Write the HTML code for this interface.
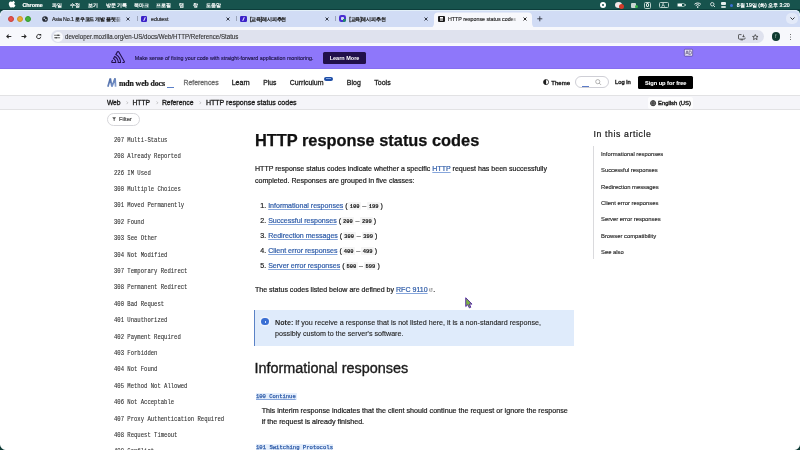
<!DOCTYPE html>
<html><head><meta charset="utf-8">
<style>
*{margin:0;padding:0;box-sizing:border-box}
html,body{width:800px;height:450px;overflow:hidden;background:#fff}
body{will-change:transform;-webkit-text-stroke:0.2px currentColor;font-family:"Liberation Sans",sans-serif;color:#1b1b1b;position:relative}
.a{position:absolute;white-space:nowrap}
svg.a{overflow:visible}
.mt{color:#fff;font-size:5.6px;line-height:10px;top:-0.5px;-webkit-text-stroke:0.2px #fff}
.tl{position:absolute;width:6.4px;height:6.4px;border-radius:50%;top:15.6px}
.tt{font-size:5.3px;line-height:8px;top:14.5px;color:#1f1f1f;-webkit-text-stroke:0.15px currentColor}
.tx{font-size:6px;line-height:8px;top:14px;color:#333}
.sep{position:absolute;top:16px;width:0.7px;height:5px;background:#9aa3b8}
.nav{font-size:6.9px;line-height:10px;top:77.6px;color:#1b1b1b;-webkit-text-stroke:0.28px currentColor}
.cr{font-size:6.8px;line-height:10px;top:97.8px;color:#1b1b1b;-webkit-text-stroke:0.3px currentColor}
.chev{position:absolute;top:101px;width:2.4px;height:2.4px;border-right:0.6px solid #888;border-top:0.6px solid #888;transform:rotate(45deg)}
.side{font-family:"Liberation Mono",monospace;font-size:5.57px;color:#2e2e2e;line-height:8px;left:114px;-webkit-text-stroke:0.08px currentColor;transform:scaleY(1.15);transform-origin:0 5.5px}
.toc{font-size:5.83px;color:#2a2a2a;line-height:8px;left:601px;-webkit-text-stroke:0.15px currentColor}
.p{font-size:7.05px;line-height:10px;color:#1b1b1b}
.lk{color:#2f5ca8;text-decoration:underline;text-decoration-color:#86a6dc;text-decoration-thickness:0.7px;text-underline-offset:0.6px;text-decoration-skip-ink:none}
.code{font-family:"Liberation Mono",monospace;font-weight:bold;font-size:5.5px;background:#f5f5f5;padding:0.5px 1.6px;margin:0 0.4px;border-radius:1px;color:#1b1b1b;-webkit-text-stroke:0.1px currentColor}
.cl{font-family:"Liberation Mono",monospace;font-weight:normal;font-size:5.52px;line-height:8px;color:#2f5ca8;text-decoration:underline;text-decoration-color:#86a6dc;text-underline-offset:0.5px;text-decoration-skip-ink:none;-webkit-text-stroke:0.25px currentColor}
</style></head><body>
<!-- ===== macOS menubar ===== -->
<div class="a" style="left:0;top:0;width:800px;height:16px;background:#17534d"></div>
<div class="a" style="left:0;top:9px;width:800px;height:1.5px;background:#0d3d3b"></div>
<svg class="a" style="left:8.6px;top:1.4px" width="6" height="7" viewBox="0 0 12 14"><path fill="#fff" d="M8.3 0c.1 1-.3 2-.9 2.7-.6.7-1.5 1.2-2.4 1.1-.1-1 .4-2 .9-2.6C6.5.5 7.5 0 8.3 0zM11.4 10.2c-.4.9-.6 1.3-1.1 2.1-.7 1.1-1.8 2.4-3 2.4-1.1 0-1.4-.7-2.9-.7s-1.8.7-2.9.7C.3 14.7-.7 13.5-1.4 12.4c-2-3-2.2-6.6-1-8.5.9-1.3 2.2-2.1 3.5-2.1 1.3 0 2.1.7 3.2.7 1 0 1.7-.7 3.2-.7 1.1 0 2.3.6 3.1 1.7-2.8 1.5-2.3 5.5.8 6.7z" transform="translate(2.5 -0.6) scale(0.92)"/></svg>
<div class="a mt" style="left:22.4px;font-weight:bold;font-size:5.4px">Chrome</div>
<div class="a mt" style="left:52px;font-size:5.2px">파일</div>
<div class="a mt" style="left:69.5px;font-size:5.2px">수정</div>
<div class="a mt" style="left:87.5px;font-size:5.2px">보기</div>
<div class="a mt" style="left:106px;font-size:5.2px">방문 기록</div>
<div class="a mt" style="left:134px;font-size:5.2px">북마크</div>
<div class="a mt" style="left:156px;font-size:5.2px">프로필</div>
<div class="a mt" style="left:179px;font-size:5.2px">탭</div>
<div class="a mt" style="left:193px;font-size:5.2px">창</div>
<div class="a mt" style="left:205.6px;font-size:5.2px">도움말</div>
<!-- status icons -->
<div class="a" style="left:599.6px;top:2px;width:6px;height:6px;border-radius:50%;background:#fff"></div>
<div class="a" style="left:601.6px;top:4px;width:2px;height:2px;border-radius:50%;background:#17534d"></div>
<div class="a" style="left:614.7px;top:1.8px;width:7px;height:6px;border-radius:50%;background:#f4e9e9"></div>
<div class="a" style="left:618.5px;top:4px;width:5px;height:5px;border-radius:50%;background:#d23a2a"></div>
<div class="a" style="left:630.5px;top:2.5px;width:5px;height:5px;border-radius:1px;background:#c9d6d3"></div>
<div class="a" style="left:634.5px;top:5.2px;width:3px;height:3px;border-radius:50%;background:#35b34a"></div>
<div class="a" style="left:644px;top:1.5px;width:7.3px;height:7px;border-radius:1.5px;border:0.8px solid #b9cfca"></div>
<div class="a" style="left:646.3px;top:3.3px;width:2.8px;height:3.4px;border:0.7px solid #dfe9e6;border-radius:1px"></div>
<div class="a" style="left:658.6px;top:1.7px;width:10px;height:6.8px;border-radius:1.5px;border:0.8px solid #b9cfca"></div>
<div class="a" style="left:661.6px;top:1px;font-size:5px;line-height:8px;color:#e6eeec;-webkit-text-stroke:0">A</div>
<div class="a" style="left:676.5px;top:3px;width:8.5px;height:4.3px;border-radius:1.2px;border:0.7px solid #8fb0aa;background:linear-gradient(90deg,#fff 70%,transparent 70%)"></div>
<div class="a" style="left:685.4px;top:4.4px;width:0.9px;height:1.6px;background:#8fb0aa"></div>
<svg class="a" style="left:694.4px;top:1.6px" width="7.4" height="6" viewBox="0 0 16 13"><g fill="none" stroke="#fff" stroke-width="2"><path d="M1 5a10 10 0 0 1 14 0"/><path d="M3.7 7.7a6.3 6.3 0 0 1 8.6 0"/></g><circle cx="8" cy="11" r="1.8" fill="#fff"/></svg>
<svg class="a" style="left:709.8px;top:2.2px" width="5.4" height="5.4" viewBox="0 0 10 10"><circle cx="4.2" cy="4.2" r="3.2" fill="none" stroke="#fff" stroke-width="1.4"/><path d="M6.6 6.6 9.3 9.3" stroke="#fff" stroke-width="1.5"/></svg>
<div class="a" style="left:721.2px;top:2px;width:4.8px;height:3px;border-radius:1px;background:#e8efee"></div>
<div class="a" style="left:721.2px;top:5.6px;width:4.8px;height:2.6px;border-radius:1px;background:#c6d6d3"></div>
<div class="a" style="left:729.5px;top:3.8px;width:3px;height:3px;border-radius:50%;background:#3d6fd6"></div>
<div class="a mt" style="left:736.7px;font-size:5.2px">8월 19일 (화) 오후 3:20</div>

<!-- ===== tab strip ===== -->
<div class="a" style="left:0;top:10px;width:800px;height:17px;background:#d1dcf5;border-radius:5px 5px 0 0"></div>
<div class="a" style="left:0;top:10px;width:800px;height:6px;border-top:1px solid #e2eff8;border-left:0.6px solid #e2eff8;border-right:0.6px solid #e2eff8;border-radius:5px 5px 0 0"></div>
<div class="tl" style="left:8.1px;background:#e5534d;border:0.4px solid #c9413b"></div>
<div class="tl" style="left:16.6px;background:#e9ab33;border:0.4px solid #cf9528"></div>
<div class="tl" style="left:25px;background:#45b13d;border:0.4px solid #35992f"></div>
<!-- tab1 -->
<svg class="a" style="left:41.9px;top:15.9px" width="6" height="6" viewBox="0 0 12 12"><circle cx="6" cy="6" r="5.7" fill="#262a33"/><ellipse cx="4.6" cy="4.4" rx="1.9" ry="1.6" fill="#c9d2e6"/><ellipse cx="7.6" cy="7.4" rx="1.8" ry="1.4" fill="#c9d2e6"/></svg>
<div class="a tt" style="left:51.9px;width:70px;overflow:hidden;letter-spacing:-0.12px;-webkit-mask-image:linear-gradient(90deg,#000 88%,transparent)">Asia No.1 <span style="-webkit-text-stroke:0.3px currentColor;letter-spacing:-0.25px">로우코드 개발 플랫폼</span> : 알</div>
<svg class="a" style="left:126.4px;top:16.5px" width="4" height="4" viewBox="0 0 8 8"><path d="M1 1 7 7M7 1 1 7" stroke="#2d3240" stroke-width="1.9"/></svg>
<div class="sep" style="left:136.5px"></div>
<!-- tab2 -->
<div class="a" style="left:140.8px;top:15.5px;width:6.6px;height:6.3px;border-radius:1.2px;background:#3b22c8"></div>
<div class="a" style="left:143.9px;top:16.6px;width:0.9px;height:4.1px;background:#e6e0ff;transform:rotate(25deg)"></div>
<div class="a tt" style="left:151px">edutest</div>
<svg class="a" style="left:225.5px;top:16.5px" width="4" height="4" viewBox="0 0 8 8"><path d="M1 1 7 7M7 1 1 7" stroke="#2d3240" stroke-width="1.9"/></svg>
<div class="sep" style="left:235.7px"></div>
<!-- tab3 -->
<div class="a" style="left:240px;top:15.5px;width:6.6px;height:6.3px;border-radius:1.2px;background:#3b22c8"></div>
<div class="a" style="left:243.1px;top:16.6px;width:0.9px;height:4.1px;background:#e6e0ff;transform:rotate(25deg)"></div>
<div class="a tt" style="left:250px;letter-spacing:-0.2px;-webkit-text-stroke:0.3px currentColor">[교육]레시피추천</div>
<svg class="a" style="left:324.5px;top:16.5px" width="4" height="4" viewBox="0 0 8 8"><path d="M1 1 7 7M7 1 1 7" stroke="#2d3240" stroke-width="1.9"/></svg>
<div class="sep" style="left:334.5px"></div>
<!-- tab4 -->
<div class="a" style="left:338.8px;top:15.4px;width:6.8px;height:6.6px;border-radius:2.2px;background:#4a2fd2"></div>
<div class="a" style="left:340.8px;top:17.4px;width:2.8px;height:2.6px;border-radius:0.8px;background:#d1dcf5"></div>
<div class="a" style="left:342.6px;top:19.2px;width:3px;height:2.8px;border-radius:0 0 2px 0;background:#1e8a6a"></div>
<div class="a tt" style="left:349.3px;letter-spacing:-0.2px;-webkit-text-stroke:0.3px currentColor">[교육]레시피추천</div>
<svg class="a" style="left:423.75px;top:16.5px" width="4" height="4" viewBox="0 0 8 8"><path d="M1 1 7 7M7 1 1 7" stroke="#2d3240" stroke-width="1.9"/></svg>
<!-- active tab -->
<svg class="a" style="left:429px;top:11.5px" width="108" height="16" viewBox="0 0 108 16"><path d="M0 16 Q5 16 5 11 L5 4.5 Q5 0.5 9 0.5 L99 0.5 Q103 0.5 103 4.5 L103 11 Q103 16 108 16 Z" fill="#f7f8fc"/></svg>
<div class="a" style="left:438px;top:15.8px;width:6.8px;height:6.5px;border-radius:1px;background:#1b1b1b"></div>
<div class="a" style="left:439.8px;top:17.3px;width:3.2px;height:0.7px;background:#fff;box-shadow:0 1.3px 0 #fff,0 2.6px 0 #fff"></div>
<div class="a tt" style="left:448px;width:70px;overflow:hidden;-webkit-mask-image:linear-gradient(90deg,#000 88%,transparent)">HTTP response status codes</div>
<svg class="a" style="left:523px;top:16.5px" width="4" height="4" viewBox="0 0 8 8"><path d="M1 1 7 7M7 1 1 7" stroke="#222" stroke-width="1.9"/></svg>
<svg class="a" style="left:537.2px;top:15.7px" width="5.6" height="5.6" viewBox="0 0 10 10"><path d="M5 0.5v9M0.5 5h9" stroke="#2d3240" stroke-width="1.6"/></svg>
<div class="a" style="left:786px;top:13px;width:12px;height:11px;border-radius:5px;background:#e3eaf9"></div>
<svg class="a" style="left:789.5px;top:17.2px" width="5" height="3" viewBox="0 0 10 6"><path d="M1 1 5 5 9 1" fill="none" stroke="#222" stroke-width="1.8"/></svg>

<!-- ===== toolbar ===== -->
<div class="a" style="left:0;top:27px;width:800px;height:19px;background:#f7f8fc"></div>
<svg class="a" style="left:6.4px;top:34.4px" width="5.8" height="4.8" viewBox="0 0 12 10"><path d="M11 5H1.8M5.5 1.2 1.6 5 5.5 8.8" fill="none" stroke="#2a2a2a" stroke-width="2.1"/></svg>
<svg class="a" style="left:21.4px;top:34.4px" width="5.8" height="4.8" viewBox="0 0 12 10"><path d="M1 5h9.2M6.5 1.2l3.9 3.8-3.9 3.8" fill="none" stroke="#2a2a2a" stroke-width="2.1"/></svg>
<svg class="a" style="left:36px;top:34px" width="5.6" height="5" viewBox="0 0 12 11"><path d="M10.2 6.2A4.5 4.5 0 1 1 8.6 2.3" fill="none" stroke="#2a2a2a" stroke-width="2.1"/><path d="M6.4 0.2h4.8v4.8z" fill="#2a2a2a"/></svg>
<div class="a" style="left:51px;top:30.2px;width:713px;height:13.2px;border-radius:7px;background:#dfe2ee"></div>
<div class="a" style="left:52.5px;top:31.6px;width:10.4px;height:10.4px;border-radius:50%;background:#f9fafd"></div>
<svg class="a" style="left:54.4px;top:34.2px" width="6.2" height="5" viewBox="0 0 12 10"><g stroke="#333" stroke-width="1.4" fill="none"><path d="M0 2.5h12M0 7.5h12"/></g><circle cx="8" cy="2.5" r="1.6" fill="#333"/><circle cx="4" cy="7.5" r="1.6" fill="#333"/></svg>
<div class="a" style="left:65px;top:32.4px;font-size:6.17px;line-height:9px;color:#2e2e2e;transform:scaleY(1.12);transform-origin:0 70%;-webkit-text-stroke:0.1px currentColor">developer.mozilla.org/en-US/docs/Web/HTTP/Reference/Status</div>
<svg class="a" style="left:737.9px;top:33.7px" width="7.5" height="6.2" viewBox="0 0 15 12"><path d="M7 1H2.2Q1 1 1 2.2v6.6Q1 10 2.2 10h10.6Q14 10 14 8.8V7" fill="none" stroke="#333" stroke-width="1.5"/><path d="M5 11.5h5" stroke="#333" stroke-width="1.5"/><path d="M11 1v5M8.8 3.8 11 6l2.2-2.2" fill="none" stroke="#333" stroke-width="1.4"/></svg>
<svg class="a" style="left:751.9px;top:33.5px" width="6.6" height="6.3" viewBox="0 0 12 11.5"><path d="M6 1 7.5 4.2 11 4.5 8.4 6.8 9.2 10.3 6 8.4 2.8 10.3 3.6 6.8 1 4.5 4.5 4.2Z" fill="none" stroke="#333" stroke-width="1.4" stroke-linejoin="round"/></svg>
<div class="a" style="left:771.6px;top:32.3px;width:8.7px;height:8.6px;border-radius:50%;background:#0f3a30"></div>
<div class="a" style="left:775px;top:34px;font-size:5px;line-height:5px;color:#a7c8b7;-webkit-text-stroke:0">f</div>
<div class="a" style="left:790.3px;top:33.8px;width:1.1px;height:1.1px;border-radius:50%;background:#444;box-shadow:0 2.5px 0 #444,0 5px 0 #444"></div>
<div class="a" style="left:0;top:45px;width:800px;height:1px;background:#fbfbfd"></div>

<!-- ===== sentry banner ===== -->
<div class="a" style="left:0;top:46px;width:800px;height:22.6px;background:#8e77fa;box-shadow:inset 0 -0.6px 0 #7f69e6"></div>
<svg class="a" style="left:110.9px;top:51.4px" width="14.1" height="12.1" viewBox="0 0 50 44"><path fill="#21104a" d="M29,2.26a4.67,4.67,0,0,0-8,0L14.42,13.53A32.21,32.21,0,0,1,32.17,40.19H27.55A27.68,27.68,0,0,0,12.09,17.47L6,28a15.92,15.92,0,0,1,9.23,12.17H4.62A.76.76,0,0,1,4,39.06l2.94-5a10.74,10.74,0,0,0-3.360-1.9l-2.91,5a4.54,4.54,0,0,0,1.69,6.24A4.66,4.66,0,0,0,4.62,44H19.150a19.4,19.4,0,0,0-8-17.31l2.31-4A23.87,23.87,0,0,1,23.76,44H36.07a35.88,35.88,0,0,0-16.41-31.8l4.67-8a.77.77,0,0,1,1.05-.27c.53.29,20.29,34.77,20.66,35.17a.76.76,0,0,1-.68,1.13H40.6q.09,1.910,0,3.81h4.78A4.59,4.59,0,0,0,50,39.43a4.49,4.49,0,0,0-.62-2.28Z"/></svg>
<div class="a" style="left:134.7px;top:53.8px;font-size:5.37px;line-height:8px;color:#1b1340;-webkit-text-stroke:0.12px currentColor">Make sense of fixing your code with straight-forward application monitoring.</div>
<div class="a" style="left:322.8px;top:51.5px;width:43.2px;height:12.8px;border-radius:1.5px;background:#21104a"></div>
<div class="a" style="left:329.7px;top:54.2px;font-size:5.51px;line-height:8px;color:#fff;font-weight:bold;-webkit-text-stroke:0">Learn More</div>
<svg class="a" style="left:684px;top:48.6px" width="9" height="7.4" viewBox="0 0 18 15"><rect x="0.6" y="0.6" width="16.8" height="13.8" rx="1.5" fill="#e6e1f8" stroke="#3c2d7a" stroke-width="1.1"/><path d="M3.3 11 5.6 3.8h.8L8.7 11M4.2 8.6h3.6M10.3 3.8v7.2h1.6q3.2 0 3.2-3.6t-3.2-3.6z" fill="none" stroke="#3a3160" stroke-width="1.1"/></svg>

<!-- ===== mdn header ===== -->
<svg class="a" style="left:104px;top:75px" width="16" height="15" viewBox="104 75 16 15"><defs><linearGradient id="mg" x1="0" x2="1" y1="0" y2="1"><stop offset="0" stop-color="#3f5f9f"/><stop offset="1" stop-color="#8aa3d3"/></linearGradient></defs><path d="M107.9 86.7 110.3 78.4 111.9 86.6 115.1 78.4 115.6 86.7" fill="none" stroke="url(#mg)" stroke-width="1.7" stroke-linejoin="bevel"/></svg>
<div class="a" style="left:118.9px;top:78.6px;font-family:'Liberation Serif',serif;font-weight:bold;font-size:7.8px;line-height:10px;color:#1b1b1b;letter-spacing:-0.1px;-webkit-text-stroke:0.22px currentColor">mdn web docs</div>
<div class="a" style="left:167px;top:87.4px;width:6.8px;height:1px;background:#5a7fc8"></div>
<div class="a nav" style="left:183.5px;font-size:6.86px;color:#6a6a6a">References</div>
<div class="a nav" style="left:231.7px;font-size:7.04px">Learn</div>
<div class="a nav" style="left:263.2px;font-size:6.73px">Plus</div>
<div class="a nav" style="left:289.8px;font-size:6.99px">Curriculum</div>
<div class="a" style="left:323.7px;top:76.6px;width:9.8px;height:4.8px;border-radius:2.4px;background:#1f4ea6"></div>
<div class="a" style="left:326.2px;top:78.4px;width:4.8px;height:1.1px;background:#7ea2e2"></div>
<div class="a nav" style="left:346.8px;font-size:6.99px">Blog</div>
<div class="a nav" style="left:374.3px;font-size:7.02px">Tools</div>
<svg class="a" style="left:542.5px;top:79.3px" width="6.2" height="6.2" viewBox="0 0 12 12"><circle cx="6" cy="6" r="5" fill="none" stroke="#1b1b1b" stroke-width="1.4"/><path d="M6 1a5 5 0 0 0 0 10z" fill="#1b1b1b"/></svg>
<div class="a nav" style="left:551.3px;font-size:6.0px;-webkit-text-stroke:0.35px currentColor">Theme</div>
<div class="a" style="left:575px;top:76px;width:33.5px;height:12.3px;border-radius:6.2px;border:0.7px solid #cfcfd6;background:#fff"></div>
<div class="a" style="left:581.5px;top:85.6px;width:7.5px;height:0.9px;background:#5b7bc7"></div>
<svg class="a" style="left:595px;top:79.4px" width="6.6" height="6.4" viewBox="0 0 12 12"><circle cx="5" cy="5" r="3.9" fill="none" stroke="#8a8a8a" stroke-width="1.2"/><path d="M7.8 7.8 11 11" stroke="#8a8a8a" stroke-width="1.3"/></svg>
<div class="a nav" style="left:615px;top:76.8px;font-size:5.8px;-webkit-text-stroke:0.4px currentColor">Log in</div>
<div class="a" style="left:638.1px;top:75.9px;width:55.1px;height:13px;border-radius:1.5px;background:#000"></div>
<div class="a nav" style="left:644.9px;font-size:5.63px;font-weight:bold;color:#fff;-webkit-text-stroke:0.1px #fff">Sign up for free</div>

<!-- ===== breadcrumbs ===== -->
<div class="a" style="left:0;top:95.3px;width:800px;height:14.6px;background:#f5f5f9;border-top:1px solid #e2e2e4;border-bottom:1px solid #e2e2e4"></div>
<div class="a cr" style="left:106.9px;font-size:6.72px">Web</div>
<svg class="a" style="left:125.8px;top:100.8px" width="2.4" height="3.6" viewBox="0 0 4 6"><path d="M1 0.8 3 3 1 5.2" fill="none" stroke="#9a9a9a" stroke-width="0.9"/></svg>
<div class="a cr" style="left:132.5px;font-size:6.7px">HTTP</div>
<svg class="a" style="left:155.6px;top:100.8px" width="2.4" height="3.6" viewBox="0 0 4 6"><path d="M1 0.8 3 3 1 5.2" fill="none" stroke="#9a9a9a" stroke-width="0.9"/></svg>
<div class="a cr" style="left:161.9px;font-size:6.85px">Reference</div>
<svg class="a" style="left:198.8px;top:100.8px" width="2.4" height="3.6" viewBox="0 0 4 6"><path d="M1 0.8 3 3 1 5.2" fill="none" stroke="#9a9a9a" stroke-width="0.9"/></svg>
<div class="a cr" style="left:205.9px;font-size:7.05px">HTTP response status codes</div>
<div class="a" style="left:648px;top:96.6px;width:45px;height:12.3px;background:#fdfdfe;border-radius:2px"></div>
<svg class="a" style="left:650.1px;top:99.6px" width="6.2" height="6.4" viewBox="0 0 12 12"><circle cx="6" cy="6" r="5" fill="#8a8a8a" stroke="#2e2e2e" stroke-width="1.6"/><path d="M6 1c-1.8 1.8-1.8 8.2 0 10M6 1c1.8 1.8 1.8 8.2 0 10M1 6h10" stroke="#2e2e2e" stroke-width="1.1" fill="none"/></svg>
<div class="a cr" style="left:658px;font-size:5.88px;-webkit-text-stroke:0.35px currentColor;top:97.7px">English (US)</div>

<!-- ===== left sidebar ===== -->
<div class="a" style="left:107px;top:112.8px;width:33px;height:13.2px;border-radius:6.6px;border:0.7px solid #d6d6da"></div>
<svg class="a" style="left:111.5px;top:117px" width="4.3" height="4.3" viewBox="0 0 8 8"><path d="M0.5 0.5h7L4.8 4v3.5H3.2V4z" fill="#555"/></svg>
<div class="a" style="left:119px;top:115.2px;font-size:5.74px;line-height:8px;color:#4a4a4a">Filter</div>
<div class="a side" style="top:136.92px">207 Multi-Status</div>
<div class="a side" style="top:153.31px">208 Already Reported</div>
<div class="a side" style="top:169.70px">226 IM Used</div>
<div class="a side" style="top:186.09px">300 Multiple Choices</div>
<div class="a side" style="top:202.48px">301 Moved Permanently</div>
<div class="a side" style="top:218.87px">302 Found</div>
<div class="a side" style="top:235.26px">303 See Other</div>
<div class="a side" style="top:251.65px">304 Not Modified</div>
<div class="a side" style="top:268.04px">307 Temporary Redirect</div>
<div class="a side" style="top:284.43px">308 Permanent Redirect</div>
<div class="a side" style="top:300.82px">400 Bad Request</div>
<div class="a side" style="top:317.21px">401 Unauthorized</div>
<div class="a side" style="top:333.60px">402 Payment Required</div>
<div class="a side" style="top:349.99px">403 Forbidden</div>
<div class="a side" style="top:366.38px">404 Not Found</div>
<div class="a side" style="top:382.77px">405 Method Not Allowed</div>
<div class="a side" style="top:399.16px">406 Not Acceptable</div>
<div class="a side" style="top:415.55px">407 Proxy Authentication Required</div>
<div class="a side" style="top:431.94px">408 Request Timeout</div>
<div class="a side" style="top:448.33px">409 Conflict</div>

<!-- ===== main ===== -->
<div class="a" style="left:255px;top:129.73px;font-size:16.36px;line-height:20px;font-weight:bold;color:#111;-webkit-text-stroke:0.25px currentColor">HTTP response status codes</div>
<div class="a p" style="left:255px;top:164.1px">HTTP response status codes indicate whether a specific <span class="lk">HTTP</span> request has been successfully</div>
<div class="a p" style="left:255px;top:175.7px">completed. Responses are grouped in five classes:</div>
<div class="a p" style="left:260.3px;top:200.56px">1. <span class="lk">Informational responses</span> (<span class="code">100</span>&#8202;–&#8202;<span class="code">199</span>)</div>
<div class="a p" style="left:260.3px;top:215.56px">2. <span class="lk">Successful responses</span> (<span class="code">200</span>&#8202;–&#8202;<span class="code">299</span>)</div>
<div class="a p" style="left:260.3px;top:230.56px">3. <span class="lk">Redirection messages</span> (<span class="code">300</span>&#8202;–&#8202;<span class="code">399</span>)</div>
<div class="a p" style="left:260.3px;top:245.56px">4. <span class="lk">Client error responses</span> (<span class="code">400</span>&#8202;–&#8202;<span class="code">499</span>)</div>
<div class="a p" style="left:260.3px;top:260.56px">5. <span class="lk">Server error responses</span> (<span class="code">500</span>&#8202;–&#8202;<span class="code">599</span>)</div>
<div class="a p" style="left:255px;top:285.4px">The status codes listed below are defined by <span class="lk">RFC 9110</span></div>
<svg class="a" style="left:429px;top:288.4px" width="3.6" height="3.8" viewBox="0 0 8 8"><path d="M3 1.2H1.2v5.6h5.6V5M4.4 1h2.6v2.6M6.8 1.2 3.6 4.4" fill="none" stroke="#6a6a6a" stroke-width="1.2"/></svg>
<div class="a p" style="left:433.3px;top:285.4px">.</div>

<div class="a" style="left:254px;top:309.5px;width:319.8px;height:36.6px;background:#dfebfb"></div>
<div class="a" style="left:254px;top:309.5px;width:1px;height:36.6px;background:#5a82c6"></div>
<div class="a" style="left:261.4px;top:317.9px;width:7.2px;height:7.2px;border-radius:50%;background:#3a6fd3;box-shadow:0 0 0 1.5px #eef4fd"></div>
<div class="a" style="left:264.6px;top:320.6px;width:0.9px;height:2.6px;background:#cfe0ff"></div>
<div class="a p" style="left:275.1px;top:317.9px;font-size:7.15px;color:#262626;-webkit-text-stroke:0.12px currentColor"><b style="-webkit-text-stroke:0px">Note:</b> If you receive a response that is not listed here, it is a non-standard response,</div>
<div class="a p" style="left:275.1px;top:329.4px;font-size:7.15px;color:#262626;-webkit-text-stroke:0.12px currentColor">possibly custom to the server's software.</div>

<div class="a" style="left:254.4px;top:357.91px;font-size:14.41px;line-height:20px;color:#1b1b1b;-webkit-text-stroke:0.35px currentColor">Informational responses</div>
<div class="a" style="left:255.5px;top:392.5px;width:41px;height:7.6px;background:#e4eefc"></div>
<div class="a cl" style="left:256px;top:392.53px">100 Continue</div>
<div class="a p" style="left:261.7px;top:405.8px;font-size:7.15px">This interim response indicates that the client should continue the request or ignore the response</div>
<div class="a p" style="left:261.7px;top:417.4px;font-size:7.15px">if the request is already finished.</div>
<div class="a" style="left:255.5px;top:443.6px;width:77.6px;height:7.6px;background:#e4eefc"></div>
<div class="a cl" style="left:256px;top:443.81px;font-size:5.59px">101 Switching Protocols</div>

<div class="a" style="left:0;top:444px;width:6px;height:6px;background:radial-gradient(circle at 6px 0,transparent 5.5px,#0e3b36 6.5px)"></div>
<div class="a" style="left:794px;top:444px;width:6px;height:6px;background:radial-gradient(circle at 0 0,transparent 5.5px,#0e3b36 6.5px)"></div>
<!-- ===== cursor ===== -->
<svg class="a" style="left:465px;top:296.5px" width="8" height="11.5" viewBox="0 0 16 23"><path d="M1.5 1.5V19L5.6 15.3 8.7 21.8 11.6 20.4 8.6 14.2H14Z" fill="#7cb342" stroke="#5a2ea6" stroke-width="2" stroke-linejoin="round"/></svg>

<!-- ===== toc ===== -->
<div class="a" style="left:593.5px;top:128.19px;font-size:8.7px;line-height:12px;letter-spacing:0.62px;color:#1b1b1b;-webkit-text-stroke:0.22px currentColor">In this article</div>
<div class="a" style="left:593px;top:145.8px;width:0.9px;height:113.4px;background:#dadadd"></div>
<div class="a toc" style="top:149.68px">Informational responses</div>
<div class="a toc" style="top:166.13px">Successful responses</div>
<div class="a toc" style="top:182.58px">Redirection messages</div>
<div class="a toc" style="top:199.03px">Client error responses</div>
<div class="a toc" style="top:215.48px">Server error responses</div>
<div class="a toc" style="top:231.93px">Browser compatibility</div>
<div class="a toc" style="top:248.38px">See also</div>
</body></html>
